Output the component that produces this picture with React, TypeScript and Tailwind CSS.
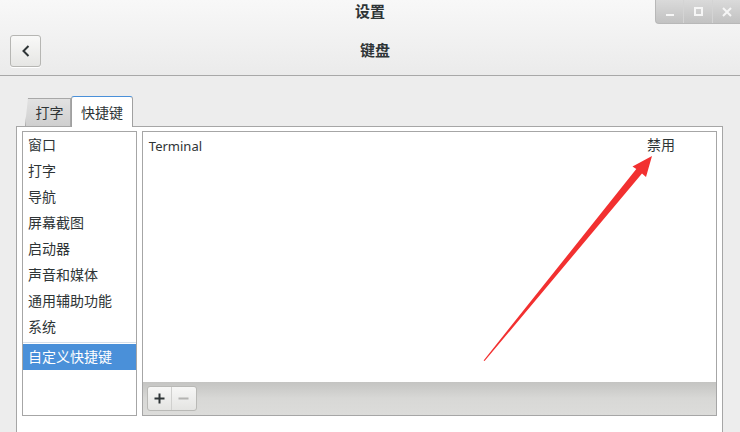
const categories = ["窗口", "打字", "导航", "屏幕截图", "启动器", "声音和媒体", "通用辅助功能", "系统"];

function WindowControls() {
  return (
    <div className="flex h-[24px] rounded-bl-[4px] border-b border-l border-[#b8b8b8] bg-gradient-to-b from-[#dadada] to-[#c2c2c2] text-[#f6f6f6]">
      <div className="flex w-[28px] items-center justify-center border-r border-[#d4d4d4]">
        <div className="mt-[7px] h-[2px] w-[8px] bg-[#f6f6f6]" />
      </div>
      <div className="flex w-[29px] items-center justify-center border-r border-[#d4d4d4]">
        <div className="h-[9px] w-[9px] border-2 border-[#f6f6f6]" />
      </div>
      <div className="flex w-[27px] items-center justify-center">
        <svg width="10" height="10" viewBox="0 0 10 10">
          <path d="M1 1 L9 9 M9 1 L1 9" stroke="#f6f6f6" strokeWidth="2" />
        </svg>
      </div>
    </div>
  );
}

function Header() {
  return (
    <div className="h-[76px] border-b border-[#a8a8a8] bg-gradient-to-b from-[#f8f8f8] to-[#ebebeb]">
      <div className="grid h-[24px] grid-cols-[1fr_auto_1fr]">
        <div />
        <div className="-mt-[2px] flex items-center text-[15px] font-bold text-[#2e3436]">设置</div>
        <div className="flex justify-end">
          <WindowControls />
        </div>
      </div>
      <div className="grid grid-cols-[1fr_auto_1fr] items-center pl-[10px] pt-[11px]">
        <div>
          <button className="flex h-[32px] w-[31px] items-center justify-center rounded-[3px] border border-[#b6b6b3] bg-gradient-to-b from-[#f9f9f8] to-[#e6e6e4] shadow-[0_1px_0_#fff]">
            <svg width="10" height="12" viewBox="0 0 10 12">
              <path d="M7.5 1 L2.5 6 L7.5 11" fill="none" stroke="#2e3436" strokeWidth="2" />
            </svg>
          </button>
        </div>
        <div className="-mt-[2px] text-[15px] font-bold text-[#2e3436]">键盘</div>
        <div />
      </div>
    </div>
  );
}

function Tabs() {
  return (
    <div className="flex items-end pl-[9px] text-[14px] text-[#2e3436]">
      <div className="flex h-[28px] w-[46px] items-center justify-center rounded-tl-[3px] border border-b-0 border-[#a8a8a8] bg-gradient-to-b from-[#e2e2e2] to-[#cfcfcf] pl-[3px] [clip-path:polygon(3px_0,100%_0,100%_100%,0_100%)]">
        打字
      </div>
      <div className="relative -mb-px flex h-[31px] w-[62px] items-center justify-center rounded-t-[3px] border border-b-0 border-[#a0a0a0] border-t-[#4a90d9] bg-white">
        快捷键
      </div>
    </div>
  );
}

function CategoryList() {
  return (
    <div className="flex h-[285px] w-[115px] flex-col border border-[#a6a6a6] bg-white text-[14px] text-[#2e3436]">
      {categories.map((c) => (
        <div key={c} className="flex h-[26px] shrink-0 items-center pb-[2px] pl-[5px]">
          {c}
        </div>
      ))}
      <div className="flex h-[4px] shrink-0 items-center">
        <div className="h-px w-full bg-[#d6dfe9]" />
      </div>
      <div className="flex h-[26px] shrink-0 items-center bg-[#4a90d9] pb-[1px] pl-[5px] text-white">自定义快捷键</div>
    </div>
  );
}

function ShortcutPanel() {
  return (
    <div className="flex h-[285px] w-[576px] flex-col border border-[#a6a6a6]">
      <div className="flex-1 bg-white">
        <div className="flex h-[26px] items-center justify-between pl-[6px] pr-[41px] text-[#2e3436]">
          <span className="mt-[3px] text-[13px]">Terminal</span>
          <span className="-mt-[1px] text-[14px]">禁用</span>
        </div>
      </div>
      <div className="flex h-[33px] items-center bg-gradient-to-b from-[#c4c4c2] via-[#d8d8d6] to-[#dcdcda] px-[4px]">
        <div className="flex h-[25px] overflow-hidden rounded-[3px] border border-[#b9b9b6] bg-gradient-to-b from-[#f7f7f6] to-[#e4e4e2]">
          <div className="flex w-[24px] items-center justify-center border-r border-[#d0d0ce]">
            <svg width="11" height="11" viewBox="0 0 11 11">
              <path d="M5.5 0.5 V10.5 M0.5 5.5 H10.5" stroke="#2e3436" strokeWidth="2" />
            </svg>
          </div>
          <div className="flex w-[24px] items-center justify-center">
            <svg width="11" height="11" viewBox="0 0 11 11">
              <path d="M0.5 5.5 H10.5" stroke="#b4b4b2" strokeWidth="2" />
            </svg>
          </div>
        </div>
      </div>
    </div>
  );
}

function Arrow() {
  return (
    <svg className="pointer-events-none absolute left-0 top-0" width="740" height="432" viewBox="0 0 740 432">
      <polygon
        points="652,156 646,177 642,173.5 484.6,361 483.6,360.4 636.3,169 632.5,166.5"
        fill="#f23030"
      />
    </svg>
  );
}

export default function App() {
  return (
    <div
      className="relative h-[432px] w-[740px] overflow-hidden bg-[#ededed]"
      style={{ fontFamily: '"Noto Sans", "Noto Sans CJK SC", sans-serif' }}
    >
      <Header />
      <div className="px-[16px] pt-[20px]">
        <Tabs />
        <div className="h-[320px] w-[707px] border border-[#a6a6a6] bg-white px-[5px] pt-[4px]">
          <div className="flex gap-[5px]">
            <CategoryList />
            <ShortcutPanel />
          </div>
        </div>
      </div>
      <Arrow />
    </div>
  );
}
